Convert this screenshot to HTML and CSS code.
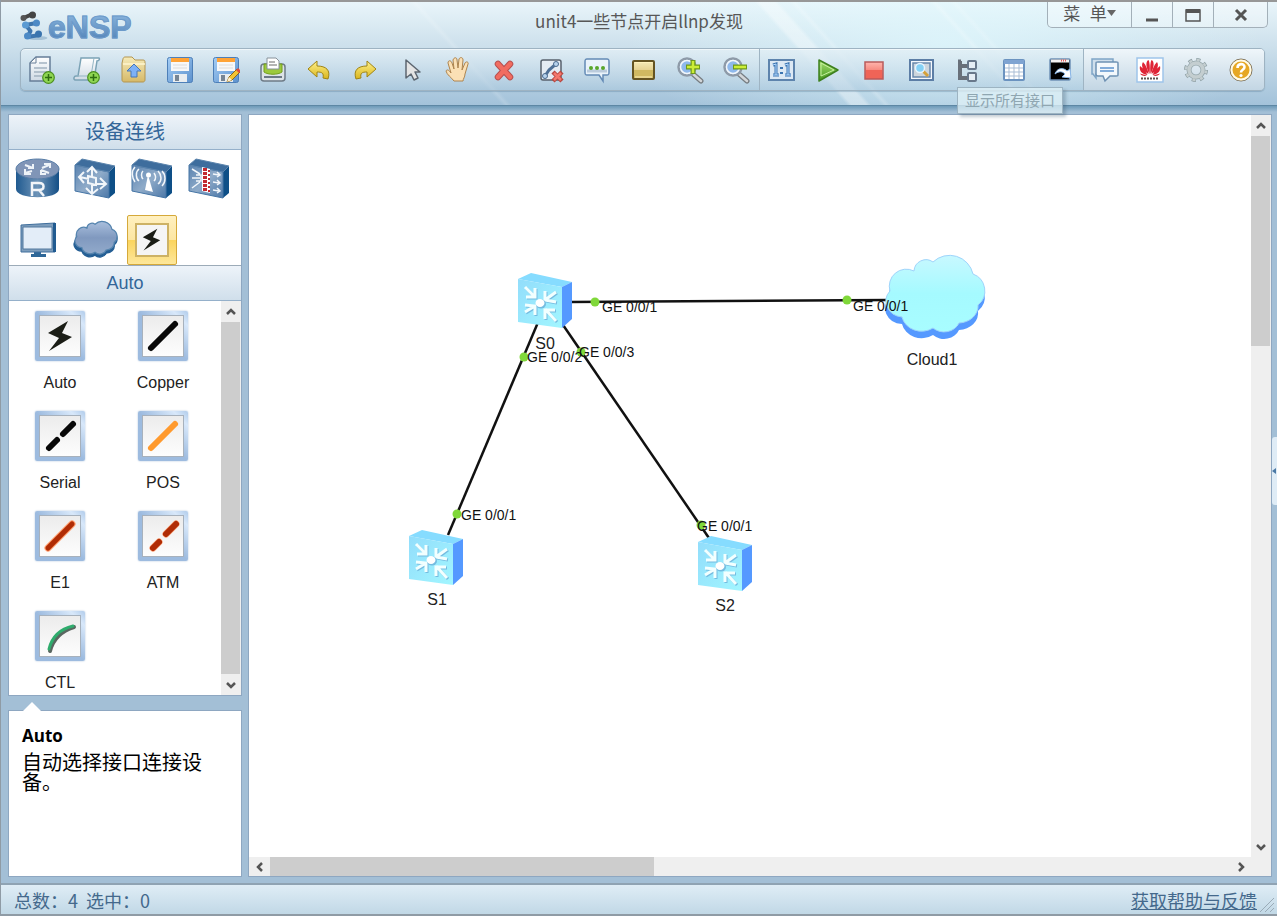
FILE: index.html
```html
<!DOCTYPE html>
<html lang="zh-CN">
<head>
<meta charset="UTF-8">
<meta name="viewport" content="width=device-width, initial-scale=1.0">
<title>eNSP</title>
<link rel="stylesheet" href="styles.css">
</head>
<body>

<!-- shared shapes -->
<svg class="defs" width="0" height="0" aria-hidden="true">
    <defs>
        <linearGradient id="gBlue" x1="0" y1="0" x2="1" y2="1"><stop offset="0" stop-color="#5a83b0"/><stop offset=".5" stop-color="#8fabc9"/><stop offset="1" stop-color="#4c78a8"/></linearGradient>
        <linearGradient id="gRouter" x1="0" y1="0" x2="1" y2="0"><stop offset="0" stop-color="#205a90"/><stop offset=".5" stop-color="#6e94b8"/><stop offset="1" stop-color="#144f86"/></linearGradient>
        <linearGradient id="gCloud" x1="0" y1="0" x2="0" y2="1"><stop offset="0" stop-color="#a9bfdd"/><stop offset=".5" stop-color="#8099bf"/><stop offset="1" stop-color="#92aacb"/></linearGradient>
        <linearGradient id="gSky" x1="0" y1="0" x2="0" y2="1"><stop offset="0" stop-color="#c8f8ff"/><stop offset=".5" stop-color="#a5faff"/><stop offset="1" stop-color="#a8fdff"/></linearGradient>
        <linearGradient id="gFace" x1="0" y1="0" x2="1" y2="1"><stop offset="0" stop-color="#92ddfb"/><stop offset="1" stop-color="#a2f6ff"/></linearGradient>
        <linearGradient id="gYellow" x1="0" y1="0" x2="0" y2="1"><stop offset="0" stop-color="#fff18b"/><stop offset="1" stop-color="#d9b51c"/></linearGradient>
        <linearGradient id="gSand" x1="0" y1="0" x2="0" y2="1"><stop offset="0" stop-color="#f6ebb9"/><stop offset="1" stop-color="#d6b968"/></linearGradient>
        <linearGradient id="gGreen" x1="0" y1="0" x2="0" y2="1"><stop offset="0" stop-color="#a6e070"/><stop offset="1" stop-color="#42961d"/></linearGradient>
        <linearGradient id="gPaper" x1="0" y1="0" x2="0" y2="1"><stop offset="0" stop-color="#ffffff"/><stop offset="1" stop-color="#cfdae5"/></linearGradient>
        <linearGradient id="gRed" x1="0" y1="0" x2="0" y2="1"><stop offset="0" stop-color="#ffb5ae"/><stop offset="1" stop-color="#ee5b4e"/></linearGradient>
        <linearGradient id="gDisk" x1="0" y1="0" x2="1" y2="1"><stop offset="0" stop-color="#a4cdf5"/><stop offset="1" stop-color="#5c91cd"/></linearGradient>

        <symbol id="plus" viewBox="0 0 13 13">
            <circle cx="6.500" cy="6.500" r="5.800" fill="#8fd652" stroke="#4b8f1e" stroke-width="1.200"/>
            <path d="M6.500 3v7M3 6.500h7" stroke="#2f6d10" stroke-width="1.500"/>
        </symbol>
        <symbol id="disk" viewBox="0 0 28 28">
            <rect x="1.500" y="1.500" width="25" height="25" rx="2" fill="url(#gDisk)" stroke="#4d7fb8"/>
            <path d="M5 2h18v4H5z" fill="#ffa336"/><path d="M5 6h18v9H5z" fill="#f8f8f8"/><path d="M7 9h14M7 12h14" stroke="#dcdcdc"/>
            <path d="M7 18h14v8H7z" fill="#e9edf0"/><path d="M9 19h4v6H9z" fill="#778594"/>
        </symbol>
        <symbol id="bolt" viewBox="0 0 40 40">
            <path d="M28 5 8 17l11 5L9 35l23-14-10-4z" fill="#1b1d16"/>
        </symbol>
        <symbol id="box" viewBox="0 0 46 42">
            <path d="M37 15 43 9v27l-6 5z" fill="#0e4f87"/>
            <path d="M3 8l34 7v26L3 34z" fill="url(#gBlue)" stroke="#4575a5"/>
            <path d="M3 8 10 2 43 9 37 15z" fill="#3e6d9d" stroke="#5b84ad"/>
        </symbol>
        <symbol id="switch" viewBox="0 0 56 55">
            <path d="M1 6 14 0 55 9 45 14z" fill="#86dcff"/><path d="M45 14 55 9v37l-10 9z" fill="#5599ff"/>
            <path d="M1 6l44 8v41L1 49z" fill="url(#gFace)"/>
            <g fill="none" stroke="#75bce0" stroke-width="3" transform="translate(1 1)"><path d="M8 14l10 10M9 24h9v-9M39 19l-11 8M28 18v9l11 2M8 39l10-6M8 32l10 1v9M39 48 28 36M38 37H28v9"/></g>
            <g fill="none" stroke="#f2ffff" stroke-width="3"><path d="M8 14l10 10M9 24h9v-9M39 19l-11 8M28 18v9l11 2M8 39l10-6M8 32l10 1v9M39 48 28 36M38 37H28v9"/></g>
            <ellipse cx="24" cy="31" rx="5" ry="4.500" fill="#75bce0"/><ellipse cx="23" cy="30" rx="4.500" ry="4" fill="#fff"/>
        </symbol>
        <symbol id="lens" viewBox="0 0 28 28">
            <path d="M17 18l8 7" stroke="#777d82" stroke-width="5" stroke-linecap="round"/><path d="M17 18l8 7" stroke="#d2d6d9" stroke-width="2.500" stroke-linecap="round"/>
            <circle cx="11" cy="11" r="8.500" fill="#b8d8f8" stroke="#8e9aa8" stroke-width="2.500"/><circle cx="11" cy="11" r="6.500" fill="#8fb9ec" stroke="#f2f6fa" stroke-width="1.500"/>
        </symbol>
        <symbol id="undo" viewBox="0 0 28 28">
            <path d="M3 13 12 5v5c9 0 14 4 11 13l-5-1c1-5-1-6-6-6v5z" fill="url(#gYellow)" stroke="#a08414" stroke-linejoin="round"/>
        </symbol>
        <symbol id="up" viewBox="0 0 12 12"><path d="M2 8l4-4 4 4" fill="none" stroke="#555" stroke-width="2.500"/></symbol>
    </defs>
</svg>

<header class="header">
    <div class="title_bar">
        <div class="logo">
            <svg width="29" height="30" viewBox="0 0 28 30">
                <ellipse cx="18" cy="27" rx="10" ry="2" fill="#a6c2d6"/>
                <path d="M4 7l9-4" stroke="#454545" stroke-width="4" stroke-linecap="round"/><circle cx="4" cy="7" r="3" fill="#555"/><circle cx="13" cy="4" r="3.500" fill="#444"/>
                <path d="M17 12 6 14l5 6-3 6 12-2" fill="none" stroke="#3f76ae" stroke-width="4" stroke-linejoin="round"/>
                <circle cx="17" cy="12" r="3.500" fill="#4d8ac6"/><circle cx="6" cy="14" r="3.500" fill="#5b9bd3"/><circle cx="8" cy="25" r="3.500" fill="#4d8ac6"/><circle cx="19" cy="23" r="3.500" fill="#3a74ae"/>
            </svg>
            <span class="logo_text">eNSP</span>
        </div>
        <h1 class="title">unit4一些节点开启llnp发现</h1>
        <div class="window_btns">
            <button class="win_btn win_menu">菜&nbsp; 单<svg width="9" height="6" viewBox="0 0 9 6"><path d="M0 0h9L4.500 6z" fill="#666"/></svg></button>
            <button class="win_btn" aria-label="最小化"><svg width="14" height="14" viewBox="0 0 14 14"><path d="M1 12h12" stroke="#555" stroke-width="3"/></svg></button>
            <button class="win_btn" aria-label="最大化"><svg width="16" height="14" viewBox="0 0 16 14"><path d="M1 2h14v11H1z" fill="none" stroke="#555" stroke-width="1.500"/><path d="M1 3h14" stroke="#555" stroke-width="4"/></svg></button>
            <button class="win_btn win_close" aria-label="关闭"><svg width="14" height="14" viewBox="0 0 14 14"><path d="M2 2l10 10M12 2 2 12" stroke="#555" stroke-width="3"/></svg></button>
        </div>
    </div>

    <nav class="toolbar">
        <div class="group group_edit">
            <button class="tool" aria-label="新建拓扑"><svg viewBox="0 0 28 28"><path d="M9 1h14v24H3V7z" fill="url(#gPaper)" stroke="#667e98" stroke-width="1.500"/><path d="M9 1v6H3z" fill="#f9f9f9" stroke="#667e98"/><path d="M12 7h8M7 12h13M7 16h13M7 20h8" stroke="#a3b2c1" stroke-width="1.500"/><use href="#plus" x="15" y="15" width="13" height="13"/></svg></button>
            <button class="tool" aria-label="新建试卷"><svg viewBox="0 0 28 28"><path d="M8 2h18c1 1 0 3-2 3l-3 19H2c-2-1-1-4 1-4h2z" fill="url(#gPaper)" stroke="#7ba2b5" stroke-width="1.500"/><path d="M3 20h15l3-18" fill="none" stroke="#93b5c4"/><use href="#plus" x="14" y="15" width="13" height="13"/></svg></button>
            <button class="tool" aria-label="打开"><svg viewBox="0 0 28 28"><path d="M3 3c0-1 1-2 2-2h7l3 3h8c2 0 2 1 2 3v17c0 1-1 2-2 2H4c-1 0-2-1-2-2V7z" fill="url(#gSand)" stroke="#b39550"/><path d="M3 8h22" stroke="#fff6cf" stroke-width="1.500"/><path d="M14 8l7 7h-4v6h-6v-6H7z" fill="#7db1f7" stroke="#4777b8" stroke-linejoin="round"/></svg></button>
            <button class="tool" aria-label="保存"><svg viewBox="0 0 28 28"><use href="#disk"/></svg></button>
            <button class="tool" aria-label="另存为"><svg viewBox="0 0 28 28"><use href="#disk"/><path d="M15 26l2-5 8-8 3 3-8 8z" fill="#f4c431" stroke="#8d6717"/><path d="M25 13l3 3" stroke="#e04b3c" stroke-width="3"/><path d="M15 26l2-5 3 3z" fill="#fff0ce"/></svg></button>
            <button class="tool" aria-label="打印"><svg viewBox="0 0 28 28"><rect x="2" y="8" width="24" height="17" rx="3" fill="#dde3e8" stroke="#6e7b87" stroke-width="1.500"/><path d="M5 8h18v8c-4 3-14 3-18 0z" fill="#9cc93c" stroke="#729e1c"/><path d="M8 2h9l3 3v8H8z" fill="#fff" stroke="#88929a"/><path d="M10 6h6M10 9h8" stroke="#6b6b6b"/><path d="M5 21h18" stroke="#6b7886" stroke-width="2"/></svg></button>
            <button class="tool" aria-label="撤销"><svg viewBox="0 0 28 28"><use href="#undo"/></svg></button>
            <button class="tool" aria-label="恢复"><svg viewBox="0 0 28 28"><g transform="matrix(-1 0 0 1 28 0)"><use href="#undo"/></g></svg></button>
            <button class="tool" aria-label="恢复鼠标"><svg viewBox="0 0 28 28"><path d="M8 4v18l5-4 3 6 4-2-3-6h5z" fill="#e4e4e4" stroke="#5d6670" stroke-width="1.500" stroke-linejoin="round"/></svg></button>
            <button class="tool" aria-label="拖动"><svg viewBox="0 0 28 28"><path d="M10 25C7 21 3 19 2 15c1-2 3-1 5 2L4 7c0-3 3-3 4 0l2 6-1-9c1-3 4-3 4 0l1 8 1-9c1-2 4-2 4 1l-1 10 3-7c1-2 4-1 3 1l-3 10c0 3-2 5-2 7z" fill="#fbe0b5" stroke="#ae844e" stroke-linejoin="round"/></svg></button>
            <button class="tool" aria-label="删除"><svg viewBox="0 0 28 28"><path d="M8 8l12 13M20 8 8 21" stroke="#b64f4f" stroke-width="6.500" stroke-linecap="round"/><path d="M8 8l12 13M20 8 8 21" stroke="#f16c60" stroke-width="4.500" stroke-linecap="round"/></svg></button>
            <button class="tool" aria-label="删除连线"><svg viewBox="0 0 28 28"><rect x="4" y="4" width="20" height="20" rx="2" fill="#e4ebf3" stroke="#58626d" stroke-width="1.500"/><path d="M8 20l4-6 7-6" fill="none" stroke="#4f7097" stroke-width="3"/><circle cx="8" cy="20" r="2.500" fill="#b7d2ed" stroke="#49698d"/><circle cx="19" cy="8" r="2.500" fill="#b7d2ed" stroke="#49698d"/><path d="M16 16l9 9M25 16l-9 9" stroke="#b94740" stroke-width="4.500"/><path d="M17 17l7 7M24 17l-7 7" stroke="#f4776c" stroke-width="2.500"/></svg></button>
            <button class="tool" aria-label="文本"><svg viewBox="0 0 28 28"><path d="M4 3h20c2 0 2 1 2 3v10c0 2 0 3-2 3h-4v6l-4-6H4c-2 0-2-1-2-3V6c0-2 0-3 2-3z" fill="#e9f3fb" stroke="#638ab5" stroke-width="1.500"/><path d="M4 15h20" stroke="#bacbdc" stroke-width="3"/><circle cx="8" cy="12" r="2" fill="#58a72c"/><circle cx="14" cy="12" r="2" fill="#58a72c"/><circle cx="20" cy="12" r="2" fill="#58a72c"/></svg></button>
            <button class="tool" aria-label="调色板"><svg viewBox="0 0 28 28"><rect x="4" y="5" width="21" height="18" rx="1" fill="url(#gSand)" stroke="#655422" stroke-width="2"/><path d="M5 14h19v8H5z" fill="#d0b961"/><path d="M6 6.500h17M6 21h17" stroke="#fff2bc"/></svg></button>
            <button class="tool" aria-label="放大"><svg viewBox="0 0 28 28"><use href="#lens"/><path d="M17 4v14M10 11h14" stroke="#6f991c" stroke-width="5"/><path d="M17 5v12M11 11h12" stroke="#cced37" stroke-width="2.500"/></svg></button>
            <button class="tool" aria-label="缩小"><svg viewBox="0 0 28 28"><use href="#lens"/><path d="M11 11h14" stroke="#6f991c" stroke-width="5"/><path d="M12 11h12" stroke="#cced37" stroke-width="2.500"/></svg></button>
        </div>
        <div class="group group_run">
            <button class="tool" aria-label="重置"><svg viewBox="0 0 28 28"><rect x="2" y="4" width="25" height="20" fill="#dde9f4" stroke="#5e84ad" stroke-width="2"/><path d="M6 9l3-1v11M6 19h6M18 9l3-1v11M18 19h6M14.500 11v2M14.500 16v2" fill="none" stroke="#3c75b1" stroke-width="3"/><path d="M6 9l3-1v11M6 19h6M18 9l3-1v11M18 19h6" fill="none" stroke="#b7dbff"/></svg></button>
            <button class="tool" aria-label="开启设备"><svg viewBox="0 0 28 28"><path d="M5 4l19 10L5 25z" fill="url(#gGreen)" stroke="#3e801e" stroke-width="1.500" stroke-linejoin="round"/><path d="M7 7l13 7L7 20z" fill="none" stroke="#c6f09f"/></svg></button>
            <button class="tool" aria-label="停止设备"><svg viewBox="0 0 28 28"><rect x="5" y="6" width="18" height="17" fill="url(#gRed)" stroke="#b95b5b" stroke-width="1.500"/><path d="M6 14h16v8H6z" fill="#f06457"/></svg></button>
            <button class="tool" aria-label="采集数据"><svg viewBox="0 0 28 28"><rect x="3" y="4" width="23" height="20" fill="#f5f8fc" stroke="#5c7ea6" stroke-width="2"/><rect x="6" y="7" width="17" height="14" fill="#cdd5dc" stroke="#6888ac" stroke-width="1.500"/><path d="M16 15l5 5" stroke="#d4a13b" stroke-width="3"/><circle cx="13" cy="12" r="4.500" fill="#85d1f5" stroke="#e5f4ff" stroke-width="1.500"/></svg></button>
            <button class="tool" aria-label="显示所有接口"><svg viewBox="0 0 28 28"><path d="M7 5v17h9M7 10h9" fill="none" stroke="#68707a" stroke-width="4"/><path d="M5 5h3" stroke="#68707a" stroke-width="3"/><rect x="15" y="5" width="8" height="8" rx="1" fill="#e5eef5" stroke="#68788b" stroke-width="2"/><rect x="15" y="17" width="8" height="8" rx="1" fill="#e5eef5" stroke="#68788b" stroke-width="2"/></svg><span class="tooltip">显示所有接口</span></button>
            <button class="tool" aria-label="显示网格"><svg viewBox="0 0 28 28"><rect x="4" y="4" width="20" height="20" rx="1" fill="#fff" stroke="#6b93c0" stroke-width="2"/><path d="M4 6h20" stroke="#7fa4d2" stroke-width="4"/><path d="M5 12h18M5 16h18M5 20h18M9 8v15M14 8v15M19 8v15" stroke="#a9bdd5"/></svg></button>
            <button class="tool" aria-label="打开命令行"><svg viewBox="0 0 28 28"><rect x="4" y="3" width="20" height="21" rx="1" fill="#000" stroke="#6f91b6" stroke-width="1.500"/><path d="M5 5h18" stroke="#f2f2f2" stroke-width="3"/><path d="M15 4.500h6" stroke="#e15656" stroke-width="2" stroke-dasharray="1 1"/><path d="M9 18c2-6 8-7 12-3l3-2 1 9-9-1 3-3c-3-3-6-3-10 0z" fill="#fff" stroke="#8ab7e8"/></svg></button>
        </div>
        <div class="group group_help">
            <button class="tool" aria-label="论坛"><svg viewBox="0 0 28 28"><path d="M1 3h21v15H5v4l-3-4H1z" fill="#cfdfec" stroke="#7fa5c6" stroke-width="1.500"/><path d="M7 6h18c2 0 2 0 2 2v10c0 2 0 2-2 2h-6l-5 5-2-5H7c-1 0-2 0-2-2V8c0-2 0-2 2-2z" fill="#f3f8fc" stroke="#6e91b3" stroke-width="1.500"/><path d="M9 12h14M9 15h14" stroke="#5d92cd" stroke-width="1.500"/></svg></button>
            <button class="tool" aria-label="官网"><svg viewBox="0 0 28 28"><rect x="1" y="2" width="26" height="24" fill="#fff" stroke="#9fc5ea" stroke-width="1.500"/><g fill="#df2436"><path d="M13.500 18C9 10 10 5 12.500 4c1.500 3 1.500 9 1 14z"/><path d="M14.500 18C19 10 18 5 15.500 4c-1.500 3-1.500 9-1 14z"/><path d="M12.500 18C6 14 5 9 7 6c3 3 5 8 5.500 12zM15.500 18c6.500-4 7.500-9 5.500-12-3 3-5 8-5.500 12zM11.500 19C5 18 3 14 4 10c4 3 6 6 7.500 9zM16.500 19c6.500-1 8.500-5 7.500-9-4 3-6 6-7.500 9zM11 19.500c-3 1-6 0-7-2zM17 19.500c3 1 6 0 7-2z"/></g><path d="M5 22.500h18" stroke="#5f5350" stroke-width="2" stroke-dasharray="2 1"/></svg></button>
            <button class="tool" aria-label="设置"><svg viewBox="0 0 28 28"><circle cx="14" cy="14" r="10" fill="none" stroke="#8fa0a5" stroke-width="4" stroke-dasharray="4 3.850"/><circle cx="14" cy="14" r="7" fill="none" stroke="#95a6ab" stroke-width="5"/><circle cx="14" cy="14" r="10" fill="none" stroke="#c4ced0" stroke-width="2.500" stroke-dasharray="3 4.850" stroke-dashoffset="-.5"/><circle cx="14" cy="14" r="7" fill="none" stroke="#c4ced0" stroke-width="3.500"/></svg></button>
            <button class="tool" aria-label="帮助"><svg viewBox="0 0 28 28"><circle cx="14" cy="14" r="11" fill="#f1b83d" stroke="#7d7668"/><circle cx="14" cy="14" r="9.500" fill="#e6a724" stroke="#fffbe9" stroke-width="2"/><path d="M10.500 12c0-5 7-5 7-1 0 3-3.500 2.500-3.500 5.500" fill="none" stroke="#fff" stroke-width="2.600"/><circle cx="14" cy="19.500" r="1.600" fill="#fff"/></svg></button>
        </div>
    </nav>
</header>

<main class="main">
    <aside class="sidebar">
        <section class="panel">
            <h2 class="panel_title">设备连线</h2>
            <div class="device_types">
                <button class="type" aria-label="路由器"><svg width="46" height="42" viewBox="0 0 46 42"><path d="M1 12v20c0 11 43 11 43 0V12z" fill="url(#gRouter)"/><ellipse cx="22.500" cy="12" rx="21.500" ry="10" fill="#8095b7" stroke="#567ca6"/><path d="M10 8l8 3M18 7v4h-5M34 8l-7 3M29 7h6v4M10 16l7-2M10 12v5h6M34 16l-8-3M31 17h-5v-4" fill="none" stroke="#eef3f8" stroke-width="2"/><path d="M17 39V26h7c6 0 6 7 0 7h-7M24 33l5 6" fill="none" stroke="#f2f5f9" stroke-width="2.500"/></svg></button>
                <button class="type" aria-label="交换机"><svg width="46" height="42" viewBox="0 0 46 42"><use href="#box"/><path d="M20 20v-9M15 15l5-5 5 6M17 22l-9-2M12 15l-5 5 5 6M24 27h9M28 21l6 6-6 5M20 27v9M14 31l6 6 6-5M16 19l8 2v7l-8-2z" fill="none" stroke="#f2f6fa" stroke-width="2"/></svg></button>
                <button class="type" aria-label="无线局域网"><svg width="46" height="42" viewBox="0 0 46 42"><use href="#box"/><path d="M19 18l5 17-8-2z" fill="#fff"/><circle cx="19.500" cy="18" r="2.500" fill="#fff"/><path d="M14 14c-2 2-2 6 0 8M10 12c-4 3-3 10 0 12M6 10c-4 4-3 11 0 15M25 16c2 3 2 6 0 8M29 14c4 4 4 10 0 13M33 14c4 4 4 11 0 15" fill="none" stroke="#f2f6fa" stroke-width="1.500"/></svg></button>
                <button class="type" aria-label="防火墙"><svg width="46" height="42" viewBox="0 0 46 42"><use href="#box"/><path d="M16 10l8 2v24l-8-2z" fill="#fff"/><path d="M19 11v24" stroke="#c32a31" stroke-width="4" stroke-dasharray="3 1"/><path d="M23 13v22" stroke="#c32a31" stroke-width="2" stroke-dasharray="2 2"/><path d="M6 12l8 5M6 21h8M6 31l8-6M10 18h5v6h-5M27 17l6 1M27 25l6 1M27 33l6 1M31 15l3 3-3 2M31 23l3 3-3 2M31 31l3 3-3 2" fill="none" stroke="#f2f6fa" stroke-width="1.500"/></svg></button>
                <button class="type" aria-label="终端"><svg width="42" height="40" viewBox="0 0 42 40"><path d="M17 30h7v4h5v3H14v-3h3z" fill="#2e6798"/><path d="M4 5l34-2v29L4 32z" fill="#7d9dbc" stroke="#406f9d"/><path d="M36 3h3v29h-3z" fill="#215b91"/><path d="M6 7h29v22H6z" fill="#e3edf8" stroke="#53799e"/></svg></button>
                <button class="type" aria-label="其他设备"><svg width="46" height="40" viewBox="-3 0 108 88"><path d="M8 42A17 17 0 0 1 32 22 12 12 0 0 1 51 12 24 24 0 0 1 91 24 18 18 0 0 1 96 55 20 17 0 0 1 77 75 16 14 0 0 1 51 80 20 18 0 0 1 20 70 18 16 0 0 1 8 42Z" fill="#245e94" stroke="#245e94" stroke-width="3"/><path d="M8 36A17 17 0 0 1 32 16 12 12 0 0 1 51 7 24 24 0 0 1 91 19 18 18 0 0 1 96 50 20 17 0 0 1 77 68 16 14 0 0 1 51 73 20 18 0 0 1 20 62 18 16 0 0 1 8 36Z" fill="url(#gCloud)" stroke="#5584ae" stroke-width="3"/></svg></button>
                <button class="type type_selected" aria-label="设备连线"><svg width="34" height="34" viewBox="0 0 34 34"><rect x="1" y="1" width="32" height="32" fill="#f5f5f5" stroke="#cdb265" stroke-width="2"/><use href="#bolt" x="2" y="2" width="29" height="29"/></svg></button>
            </div>
            <h2 class="panel_title panel_title_sub">Auto</h2>
            <div class="list_wrap">
                <div class="list">
                    <button class="item"><span class="tile"><svg viewBox="0 0 40 40"><use href="#bolt"/></svg></span>Auto</button>
                    <button class="item"><span class="tile"><svg viewBox="0 0 40 40"><path d="M8 32 32 8" stroke="#080808" stroke-width="6" stroke-linecap="round"/></svg></span>Copper</button>
                    <button class="item"><span class="tile"><svg viewBox="0 0 40 40"><path d="M9 32l8-8M23 18 33 8" stroke="#080808" stroke-width="6" stroke-linecap="round"/></svg></span>Serial</button>
                    <button class="item"><span class="tile"><svg viewBox="0 0 40 40"><path d="M8 32 32 8" stroke="#ff9a2e" stroke-width="6" stroke-linecap="round"/></svg></span>POS</button>
                    <button class="item"><span class="tile"><svg viewBox="0 0 40 40"><path d="M8 32 32 8" stroke="#ff9a68" stroke-width="7" stroke-linecap="round"/><path d="M8 32 32 8" stroke="#b02c05" stroke-width="5" stroke-linecap="round"/></svg></span>E1</button>
                    <button class="item"><span class="tile"><svg viewBox="0 0 40 40"><path d="M10 32l6-6M23 18 33 8" stroke="#ffa578" stroke-width="7" stroke-linecap="round"/><path d="M10 32l6-6M23 18 33 8" stroke="#b02c05" stroke-width="6" stroke-linecap="round"/></svg></span>ATM</button>
                    <button class="item"><span class="tile"><svg viewBox="0 0 40 40"><path d="M10 35C13 23 21 15 34 11" fill="none" stroke="#5a6660" stroke-width="4" stroke-linecap="round"/><path d="M9 33C12 21 20 13 33 10" fill="none" stroke="#2fac6d" stroke-width="3" stroke-linecap="round"/></svg></span>CTL</button>
                </div>
                <div class="scroll scroll_v">
                    <button class="arrow" aria-label="向上"><svg viewBox="0 0 12 12"><use href="#up"/></svg></button>
                    <div class="track"><div class="thumb thumb_full"></div></div>
                    <button class="arrow arrow_down" aria-label="向下"><svg viewBox="0 0 12 12"><use href="#up"/></svg></button>
                </div>
            </div>
        </section>
        <section class="info">
            <h3 class="info_title">Auto</h3>
            <p class="info_text">自动选择接口连接设备。</p>
        </section>
    </aside>

    <section class="workspace">
        <div class="canvas">
            <svg class="topology" width="1000" height="740">
                <g stroke="#111" stroke-width="2.500">
                    <path d="M320 187 640 185"/>
                    <path d="M290 205 199 420"/>
                    <path d="M312 207 462 426"/>
                </g>
                <use href="#switch" x="268" y="158" width="56" height="55"/>
                <use href="#switch" x="159" y="415" width="56" height="55"/>
                <use href="#switch" x="448" y="421" width="56" height="55"/>
                <g transform="translate(633 140)">
                    <path d="M8 42A17 17 0 0 1 32 22 12 12 0 0 1 51 13 24 24 0 0 1 91 25 18 18 0 0 1 96 56 20 17 0 0 1 77 75 16 14 0 0 1 51 80 20 18 0 0 1 20 69 18 16 0 0 1 8 42Z" fill="#5599ff"/>
                    <path d="M8 36A17 17 0 0 1 32 16 12 12 0 0 1 51 7 24 24 0 0 1 91 19 18 18 0 0 1 96 50 20 17 0 0 1 77 68 16 14 0 0 1 51 73 20 18 0 0 1 20 62 18 16 0 0 1 8 36Z" fill="url(#gSky)" stroke="#9fd4fb"/>
                </g>
                <g fill="#80d83a">
                    <circle cx="346" cy="187" r="4.500"/>
                    <circle cx="598" cy="185" r="4.500"/>
                    <circle cx="275" cy="242" r="4.500"/>
                    <circle cx="332" cy="237" r="4.500"/>
                    <circle cx="208" cy="399" r="4.500"/>
                    <circle cx="452" cy="410" r="4.500"/>
                </g>
                <g class="port">
                    <text x="353" y="197">GE 0/0/1</text>
                    <text x="604" y="196">GE 0/0/1</text>
                    <text x="278" y="247">GE 0/0/2</text>
                    <text x="330" y="242">GE 0/0/3</text>
                    <text x="212" y="405">GE 0/0/1</text>
                    <text x="448" y="416">GE 0/0/1</text>
                </g>
                <g class="node_name">
                    <text x="296" y="234">S0</text>
                    <text x="188" y="490">S1</text>
                    <text x="476" y="496">S2</text>
                    <text x="683" y="250">Cloud1</text>
                </g>
            </svg>
        </div>
        <div class="scroll scroll_v">
            <button class="arrow" aria-label="向上滚动"><svg viewBox="0 0 12 12"><use href="#up"/></svg></button>
            <div class="track"><div class="thumb thumb_canvas_v"></div></div>
            <button class="arrow arrow_down" aria-label="向下滚动"><svg viewBox="0 0 12 12"><use href="#up"/></svg></button>
        </div>
        <div class="scroll scroll_h">
            <button class="arrow arrow_left" aria-label="向左滚动"><svg viewBox="0 0 12 12"><use href="#up"/></svg></button>
            <div class="track"><div class="thumb thumb_canvas_h"></div></div>
            <button class="arrow arrow_right" aria-label="向右滚动"><svg viewBox="0 0 12 12"><use href="#up"/></svg></button>
        </div>
        <div class="corner"></div>
    </section>
    <button class="collapse" aria-label="展开"><svg width="4" height="6" viewBox="0 0 4 6"><path d="M4 0v6L0 3z" fill="#4a78a5"/></svg></button>
</main>

<footer class="status">
    <span>总数：4&nbsp; 选中：0</span>
    <a class="help_link" href="#">获取帮助与反馈</a>
    <svg class="grip" width="14" height="14" viewBox="0 0 14 14"><path d="M0 14 14 0M5 14l9-9M10 14l4-4" stroke="#9aabb7"/></svg>
</footer>

</body>
</html>
```

FILE: styles.css
```css
* {
    box-sizing: border-box;
}

body {
    margin: 0;
    height: 100vh;
    display: flex;
    flex-direction: column;
    overflow: hidden;
    background: #a3bfd6;
    border-left: 1px solid #8f9ba5;
    font-family: "Liberation Sans", "Noto Sans CJK SC", sans-serif;
    font-size: 16px;
    color: #222;
}

button {
    margin: 0;
    padding: 0;
    border: 0;
    background: none;
    font: inherit;
    color: inherit;
}

h1, h2, h3, p {
    margin: 0;
    font-weight: normal;
}

.defs {
    position: absolute;
}

/* header */
.header {
    height: 106px;
    flex: none;
    border-top: 2px solid #979797;
    border-bottom: 1px solid #5d87a4;
    background:
        linear-gradient(48deg, transparent 49%, rgba(255, 255, 255, 0.15) 50%, transparent 51%) 260px 0 / 400px 104px no-repeat,
        linear-gradient(48deg, transparent 49%, rgba(255, 255, 255, 0.35) 50%, rgba(255, 255, 255, 0.35) 53%, transparent 54%, transparent 56%, rgba(255, 255, 255, 0.2) 57%, transparent 58%) 605px 0 / 400px 104px no-repeat,
        linear-gradient(48deg, transparent 49%, rgba(255, 255, 255, 0.2) 50%, transparent 51%, transparent 53%, rgba(255, 255, 255, 0.15) 54%, transparent 55%) 780px 0 / 400px 104px no-repeat,
        radial-gradient(ellipse 320px 110px at 74% 40%, rgba(225, 250, 255, 0.7), transparent),
        linear-gradient(#e9f5fa, #cbdfeb 45%, #a3c2da);
}

.title_bar {
    height: 46px;
    display: grid;
    grid-template-columns: 1fr auto 1fr;
    align-items: start;
}

.logo {
    display: flex;
    padding: 9px 0 0 18px;
}

.logo_text {
    font-size: 32px;
    line-height: 32px;
    font-weight: bold;
    background: linear-gradient(#8db8e0, #4f80b5);
    -webkit-background-clip: text;
    background-clip: text;
    color: transparent;
    -webkit-text-stroke: 1px #6c9aca;
}

.title {
    font-family: "Noto Sans CJK SC", sans-serif;
    font-size: 17px;
    line-height: 24px;
    padding-top: 7px;
    color: #575757;
}

.window_btns {
    justify-self: end;
    display: flex;
    height: 26px;
    margin-right: 9px;
    border: 1px solid #a3b0b9;
    border-top: 0;
    border-radius: 0 0 5px 5px;
    background: rgba(255, 255, 255, 0.3);
}

.win_btn {
    width: 41px;
    border-left: 1px solid #a3b0b9;
    display: flex;
    align-items: center;
    justify-content: center;
}

.win_menu {
    width: 83px;
    padding-bottom: 4px;
    border-left: 0;
    font-size: 17px;
    color: #555;
}

.win_close {
    width: 54px;
}

/* toolbar */
.toolbar {
    display: flex;
    height: 43px;
    margin: 0 12px 0 19px;
    border: 1px solid #9eb3c2;
    border-radius: 5px;
    background: linear-gradient(rgba(228, 240, 246, 0.8), rgba(170, 200, 221, 0.5));
    box-shadow: 0 1px 1px rgba(70, 110, 140, 0.3), inset 0 1px 0 rgba(255, 255, 255, 0.5);
}

.group {
    display: flex;
    justify-content: space-between;
    align-items: center;
    padding: 0 3px 0 1px;
}

.group_edit {
    flex: 735;
    padding-left: 0;
}

.group_run {
    flex: 319;
    border-left: 1px solid #9fb4c3;
}

.group_help {
    flex: 176;
    border-left: 1px solid #9fb4c3;
    background: linear-gradient(#eff6fa, #c3d6e4);
    border-radius: 0 4px 4px 0;
}

.tool {
    position: relative;
    width: 40px;
    height: 40px;
    display: flex;
    align-items: center;
    justify-content: center;
}

.tool svg {
    width: 28px;
    height: 28px;
}

.tooltip {
    position: absolute;
    z-index: 5;
    left: 10px;
    top: 37px;
    padding: 0 7px;
    border: 1px solid #9db4c2;
    background: rgba(224, 241, 247, 0.75);
    box-shadow: 3px 3px 3px rgba(60, 90, 110, 0.3);
    font-size: 15px;
    line-height: 25px;
    color: #8fa6b1;
    white-space: nowrap;
}

/* main area */
.main {
    position: relative;
    flex: 1;
    min-height: 0;
    display: flex;
    gap: 6px;
    padding: 8px 5px 6px 7px;
    background: linear-gradient(#6d9ab8, #a3bfd6 6px);
}

.sidebar {
    width: 234px;
    display: flex;
    flex-direction: column;
    gap: 14px;
}

.panel {
    flex: 1;
    min-height: 0;
    display: flex;
    flex-direction: column;
    border: 1px solid #8ea7c1;
    background: #fff;
}

.panel_title {
    flex: none;
    height: 35px;
    line-height: 34px;
    font-size: 20px;
    text-align: center;
    color: #336699;
    background: linear-gradient(#edf3f9, #d0dfeb);
    border-bottom: 1px solid #95b0ca;
}

.panel_title_sub {
    height: 36px;
    font-size: 18px;
    border-top: 1px solid #9cabb8;
}

.device_types {
    display: grid;
    grid-template-columns: repeat(4, 1fr);
    grid-auto-rows: 50px;
    row-gap: 12px;
    justify-items: center;
    padding: 3px 3px 0 0;
}

.type {
    width: 50px;
    display: flex;
    align-items: center;
    justify-content: center;
}

.type_selected {
    border: 1px solid #d5a93a;
    border-radius: 2px;
    background: linear-gradient(#fff0c0, #fce6a2 50%, #fbd45c 50%, #fde79b);
}

.list_wrap {
    flex: 1;
    min-height: 0;
    display: flex;
}

.list {
    flex: 1;
    display: grid;
    grid-template-columns: 102px 104px;
    grid-auto-rows: 100px;
    overflow: hidden;
}

.item {
    display: flex;
    flex-direction: column;
    align-items: center;
    gap: 11px;
    padding-top: 10px;
    line-height: 22px;
}

.tile {
    width: 50px;
    height: 50px;
    padding: 4px;
    border-radius: 2px;
    background: linear-gradient(45deg, #9dbbdf 50%, #d8e8fa 85%, #b0cbea);
    box-shadow: 0 0 2px #a9bfd8;
}

.tile svg {
    display: block;
    width: 42px;
    height: 42px;
    border: 1px solid #a7b1bc;
    background: linear-gradient(#ececec, #fdfdfd);
}

/* scrollbars */
.scroll {
    display: flex;
    background: #efefef;
}

.scroll_v {
    flex-direction: column;
    width: 20px;
    padding-right: 1px;
}

.scroll_h {
    height: 19px;
}

.arrow {
    flex: none;
    width: 19px;
    height: 21px;
    display: flex;
    align-items: center;
    justify-content: center;
}

.arrow svg {
    width: 12px;
    height: 12px;
}

.arrow_down svg {
    transform: rotate(180deg);
}

.scroll_h .arrow {
    width: 21px;
    height: 19px;
}

.arrow_left svg {
    transform: rotate(-90deg);
}

.arrow_right svg {
    transform: rotate(90deg);
}

.track {
    flex: 1;
}

.thumb {
    background: #cdcdcd;
}

.thumb_full {
    height: 100%;
}

.thumb_canvas_v {
    height: 30%;
}

.thumb_canvas_h {
    width: 40%;
    height: 100%;
}

/* description box */
.info {
    position: relative;
    height: 167px;
    padding: 15px 30px 0 13px;
    border: 1px solid #8ea7c1;
    background: #fff;
    color: #000;
}

.info::before {
    content: "";
    position: absolute;
    left: 14px;
    top: -9px;
    border: 9px solid transparent;
    border-top: 0;
    border-bottom-color: #fff;
}

.info_title {
    font-family: "Open Sans", sans-serif;
    font-size: 17px;
    line-height: 20px;
    font-weight: bold;
}

.info_text {
    margin-top: 7px;
    font-size: 20px;
    line-height: 20px;
}

/* canvas */
.workspace {
    flex: 1;
    min-width: 0;
    display: grid;
    grid-template-columns: 1fr 20px;
    grid-template-rows: 1fr 19px;
    border: 1px solid #8ea7c1;
    background: #fff;
}

.canvas {
    min-width: 0;
    min-height: 0;
    overflow: hidden;
}

.topology {
    display: block;
}

.port {
    font-size: 14px;
    fill: #111;
}

.node_name {
    font-size: 16px;
    fill: #222;
    text-anchor: middle;
}

.corner {
    background: #efefef;
}

.collapse {
    position: absolute;
    right: 0;
    top: 331px;
    width: 5px;
    height: 68px;
    display: flex;
    align-items: center;
    background: #dfecf6;
    border-radius: 3px 0 0 3px;
}

/* status bar */
.status {
    flex: none;
    height: 33px;
    display: flex;
    align-items: center;
    justify-content: space-between;
    padding: 0 0 0 13px;
    border-top: 2px solid #8fa3b3;
    border-bottom: 2px solid #8f9ba5;
    background: linear-gradient(#dfedf6, #c1d8e6);
    font-family: "Noto Sans CJK SC", sans-serif;
    font-size: 18px;
    color: #44698c;
}

.help_link {
    margin-left: auto;
    color: #44698c;
}

.grip {
    align-self: flex-end;
    margin: 0 3px 2px;
}
```
